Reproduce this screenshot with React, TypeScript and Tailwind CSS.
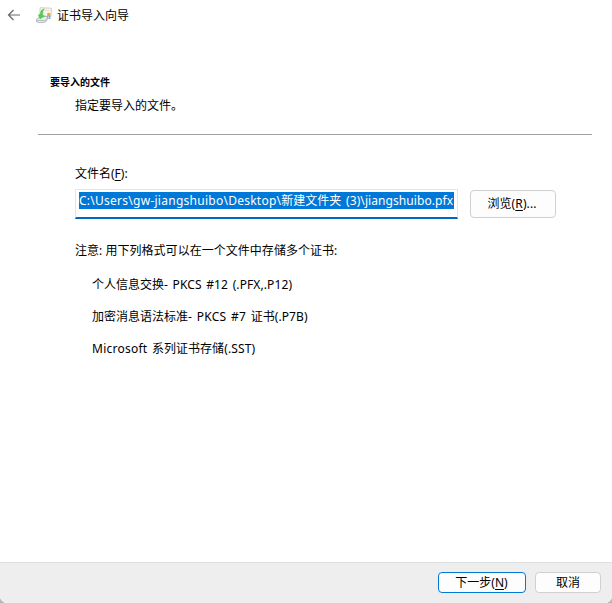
import type { ReactNode } from 'react'

function CertificateIcon() {
  return (
    <svg width="16" height="16" viewBox="0 0 16 16" fill="none">
      <path d="M4 0.700 15.500 1.200 15 9.500 4 9z" fill="#f8f5ea" stroke="#d3ccb6" strokeWidth="0.9" />
      <path d="M9 3.500l4 .2" stroke="#e6e1d2" />
      <path d="M11.800 8.500v3.500M13.700 8.500v3.500" stroke="#6ba6d6" strokeWidth="1.200" />
      <path d="M11.300 6h3v3h-3z" fill="#f0a52a" />
      <path d="M0.500 12.800 3.500 9.500h6.500l2 1.700-2.500 3.800-6.500.600L0.500 14.500z" fill="#eceeef" stroke="#a1a5a8" strokeWidth="0.8" />
      <path d="M1 13.300l7.500.2 3-2" stroke="#a9adb0" strokeWidth="0.8" />
      <path d="M8.500 1.800C5.500 2.500 4.200 4.500 4.200 7.500L2.300 7.800 4 12 8.500 9 6.800 8.300C6.500 5.500 7 3.500 8.500 1.800z" fill="#4fce58" stroke="#45bd50" strokeWidth="0.4" />
    </svg>
  )
}

function BackIcon() {
  return (
    <svg width="13" height="12" viewBox="0 0 13 12" fill="none" stroke="#686868" strokeWidth="1.2">
      <path d="M6.500 1 1.500 6l5 5M1.500 6H13" />
    </svg>
  )
}

function Button({ className, children }: { className: string; children: ReactNode }) {
  return (
    <button className={`flex items-center justify-center rounded-[4px] border bg-[#fdfdfd] whitespace-nowrap ${className}`}>
      {children}
    </button>
  )
}

export default function App() {
  return (
    <div className="h-[603px] w-[612px] bg-[#b5b5b5] font-['Noto_Sans','Noto_Sans_CJK_SC',sans-serif] text-[12px] leading-4 text-black">
      <div className="flex h-full flex-col overflow-hidden rounded-b-[7px] bg-white">
        <header className="flex h-[30px] shrink-0 items-center pl-[7px]">
          <BackIcon />
          <div className="ml-[16px]">
            <CertificateIcon />
          </div>
          <h1 className="ml-[5px] pt-px">证书导入向导</h1>
        </header>

        <main className="flex-1 pt-[44px]">
          <h2 className="pl-[50px] text-[10px] leading-4 font-bold">要导入的文件</h2>
          <p className="mt-[8px] pl-[75px]">指定要导入的文件。</p>
          <div className="mt-[20px] mr-[20px] ml-[38px] h-px bg-[#a0a0a0]" />

          <div className="pt-[31px] pl-[75px]">
            <label className="block">
              文件名(<u className="underline-offset-2">F</u>):
            </label>
            <div className="mt-[7px] flex">
              <div className="h-[30px] w-[383px] border border-b-2 border-[#e5e5e5] border-b-[#0067c0] bg-white pt-[2px] pl-[3px]">
                <div className="h-[17px] w-[375px] bg-[#0078d7] leading-[17px] whitespace-nowrap text-white">
                  <span className="tracking-[0.26px]">C:\Users\gw-jiangshuibo\Desktop\</span>
                  新建文件夹
                  <span className="tracking-[0.08px] [word-spacing:1.5px]"> (3)\jiangshuibo.pfx</span>
                </div>
              </div>
              <Button className="mt-px ml-[12px] h-[28px] w-[86px] border-[#d0d0d0] pr-[2px] tracking-[0.1px]">
                浏览(<u className="underline-offset-2">R</u>)...
              </Button>
            </div>

            <p className="mt-[24px] tracking-[0.03px]">注意: 用下列格式可以在一个文件中存储多个证书:</p>
            <ul className="mt-[18px] flex flex-col gap-4 pl-[17px]">
              <li>
                个人信息交换<span className="tracking-[0.1px] [word-spacing:1.4px]">- PKCS #12 (.PFX,.P12)</span>
              </li>
              <li>
                加密消息语法标准<span className="tracking-[0.2px] [word-spacing:1.4px]">- PKCS #7 </span>证书
                <span className="tracking-[0.1px]">(.P7B)</span>
              </li>
              <li>
                <span className="tracking-[0.25px] [word-spacing:1.3px]">Microsoft </span>系列证书存储
                <span className="tracking-[0.15px]">(.SST)</span>
              </li>
            </ul>
          </div>
        </main>

        <footer className="flex h-[41px] shrink-0 justify-end gap-[9px] border-t border-[#dfdfdf] bg-[#eeeeee] pt-[9px] pr-[11px]">
          <Button className="h-[21px] w-[88px] border-[#0078d4] pr-px">
            下一步(<u className="underline-offset-2">N</u>)
          </Button>
          <Button className="h-[21px] w-[66px] border-[#d0d0d0]">取消</Button>
        </footer>
      </div>
    </div>
  )
}
